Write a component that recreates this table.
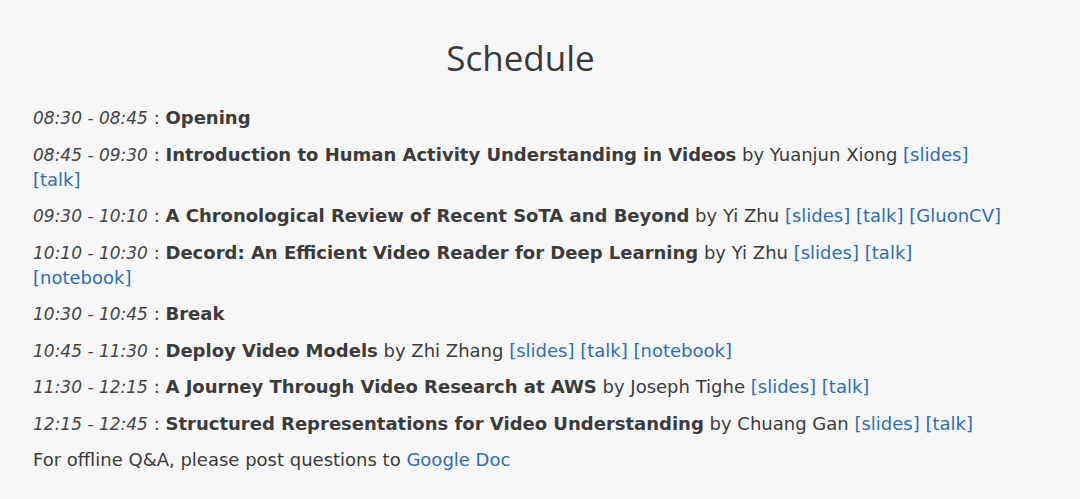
const schedule = [
  { time: "08:30 - 08:45", title: "Opening" },
  {
    time: "08:45 - 09:30",
    title: "Introduction to Human Activity Understanding in Videos",
    by: "Yuanjun Xiong",
    links: ["slides", "talk"],
  },
  {
    time: "09:30 - 10:10",
    title: "A Chronological Review of Recent SoTA and Beyond",
    by: "Yi Zhu",
    links: ["slides", "talk", "GluonCV"],
  },
  {
    time: "10:10 - 10:30",
    title: "Decord: An Efficient Video Reader for Deep Learning",
    by: "Yi Zhu",
    links: ["slides", "talk", "notebook"],
  },
  { time: "10:30 - 10:45", title: "Break" },
  {
    time: "10:45 - 11:30",
    title: "Deploy Video Models",
    by: "Zhi Zhang",
    links: ["slides", "talk", "notebook"],
  },
  {
    time: "11:30 - 12:15",
    title: "A Journey Through Video Research at AWS",
    by: "Joseph Tighe",
    links: ["slides", "talk"],
  },
  {
    time: "12:15 - 12:45",
    title: "Structured Representations for Video Understanding",
    by: "Chuang Gan",
    links: ["slides", "talk"],
  },
];

export default function App() {
  return (
    <div className="min-h-[499px] bg-[#f7f7f8] text-[#3b3b3b]">
      <section className="w-[1008px] pl-[33px] pt-[36px]">
        <h2
          className="text-center text-[35px] leading-[44px] text-[#3a3a3a] mb-[25px]"
          style={{ fontFamily: "'Open Sans', 'Liberation Sans', sans-serif" }}
        >
          Schedule
        </h2>

        <div
          className="text-[18px] leading-[25px]"
          style={{ fontFamily: "'DejaVu Sans', Verdana, sans-serif" }}
        >
          {schedule.map((item) => (
            <p key={item.time} className="mb-[11.5px]">
              <em className="text-[17px] leading-none text-[#444]">{item.time}</em> :{" "}
              <strong>{item.title}</strong>
              {item.by && <> by {item.by}</>}
              {item.links &&
                item.links.map((l) => (
                  <span key={l}>
                    {" "}
                    <a href="#" className="text-[#2f6db5]">
                      [{l}]
                    </a>
                  </span>
                ))}
            </p>
          ))}
          <p>
            For offline Q&amp;A, please post questions to{" "}
            <a href="#" className="text-[#2f6db5]">
              Google Doc
            </a>
          </p>
        </div>
      </section>
    </div>
  );
}
